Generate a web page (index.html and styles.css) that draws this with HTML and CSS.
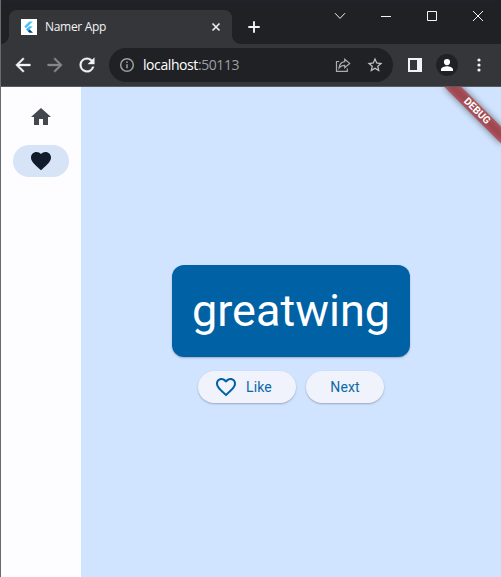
FILE: index.html
```html
<!DOCTYPE html>
<html lang="en">
<head>
<meta charset="utf-8">
<title>Namer App</title>
<link rel="stylesheet" href="styles.css">
</head>
<body>
<div class="window">
  <header class="tabstrip">
    <div class="tab">
      <svg class="favicon" viewBox="0 0 16 16"><path fill="#fff" d="M0 0h16v16H0z"/><path fill="#47c5fb" d="M8.2 2.5h3.6L5.1 9.3 3.3 7.5zM8.2 7.3h3.6L8.6 10.6l-1.8-1.8z"/><path fill="#2aa5e8" d="M5.1 10.5l1.8-1.8 1.8 1.8-1.8 1.8z"/><path fill="#00478c" d="M6.9 12.3l1.8-1.8 3.3 3.2H8.4z"/></svg>
      <span class="tab-title">Namer App</span>
      <svg class="tab-close" viewBox="0 0 10 10"><path d="M1.5 1.5l7 7M8.5 1.5l-7 7"/></svg>
    </div>
    <svg class="new-tab" viewBox="0 0 12 12"><path d="M6 .3v11.4M.3 6h11.4"/></svg>
    <div class="controls">
      <div class="control"><svg viewBox="0 0 12 12"><path d="M1 3.2l5 5.2 5-5.2"/></svg></div>
      <div class="control"><svg viewBox="0 0 12 12"><path d="M1 6.5h10"/></svg></div>
      <div class="control"><svg viewBox="0 0 12 12"><path d="M1.5 1.5h9v9h-9z"/></svg></div>
      <div class="control"><svg viewBox="0 0 12 12"><path d="M1 1l10 10M11 1L1 11"/></svg></div>
    </div>
  </header>

  <nav class="toolbar">
    <svg class="nav-icon" viewBox="0 0 24 24"><path d="M20 11H7.83l5.59-5.59L12 4l-8 8 8 8 1.41-1.41L7.83 13H20z"/></svg>
    <svg class="nav-icon disabled" viewBox="0 0 24 24"><path d="M4 11h12.17l-5.59-5.59L12 4l8 8-8 8-1.41-1.41L16.17 13H4z"/></svg>
    <svg class="nav-icon" viewBox="0 0 24 24"><path d="M17.65 6.35A7.96 7.96 0 0 0 12 4a8 8 0 1 0 7.73 10h-2.08A6 6 0 1 1 12 6c1.66 0 3.14.69 4.22 1.78L13 11h7V4z"/></svg>
    <div class="omnibox">
      <svg class="info" viewBox="0 0 16 16"><circle cx="8" cy="8" r="6.3"/><path d="M8 7.2v4M8 4.4v1.5"/></svg>
      <span class="url">localhost<span class="port">:50113</span></span>
      <svg class="share" viewBox="0 0 16 16"><path d="M4.2 4.5H1.5v9.9h10.8v-3"/><path d="M9.7 2.2l5 4.2-5 4.2V8.3c-2.7 0-4.3.8-5.6 2.6.3-3.3 2.2-5.9 5.6-6.3z"/></svg>
      <svg class="star" viewBox="0 0 24 24"><path d="M22 9.24l-7.19-.62L12 2 9.19 8.63 2 9.24l5.46 4.73L5.82 21 12 17.27 18.18 21l-1.63-7.03zM12 15.4l-3.76 2.27 1-4.28-3.32-2.88 4.38-.38L12 6.1l1.71 4.04 4.38.38-3.32 2.88 1 4.28z"/></svg>
    </div>
    <svg class="panel" viewBox="0 0 14 14"><path fill-rule="evenodd" d="M0 0h14v14H0zM2 2v10h7V2z"/></svg>
    <svg class="avatar" viewBox="0 0 22 22"><circle cx="11" cy="11" r="11"/><path d="M11 5a3.1 3.1 0 1 1 0 6.2A3.1 3.1 0 0 1 11 5zM5 17v-1.4c0-2.2 4-3.3 6-3.3s6 1.1 6 3.3V17z"/></svg>
    <svg class="menu" viewBox="0 0 4 14"><circle cx="2" cy="2" r="1.6"/><circle cx="2" cy="7" r="1.6"/><circle cx="2" cy="12" r="1.6"/></svg>
  </nav>

  <main class="app">
    <aside class="rail">
      <div class="destination"><svg viewBox="0 0 24 24"><path d="M10 20v-6h4v6h5v-8h3L12 3 2 12h3v8z"/></svg></div>
      <div class="destination selected"><svg viewBox="0 0 24 24"><path d="M12 21.35l-1.45-1.32C5.4 15.36 2 12.28 2 8.5 2 5.42 4.42 3 7.5 3c1.74 0 3.41.81 4.5 2.09C13.09 3.81 14.76 3 16.5 3 19.58 3 22 5.42 22 8.5c0 3.78-3.4 6.86-8.55 11.54z"/></svg></div>
    </aside>
    <section class="page">
      <div class="card">greatwing</div>
      <div class="actions">
        <button class="button with-icon"><svg viewBox="0 0 24 24"><path d="M16.5 3c-1.74 0-3.41.81-4.5 2.09C10.91 3.81 9.24 3 7.5 3 4.42 3 2 5.42 2 8.5c0 3.78 3.4 6.86 8.55 11.54L12 21.35l1.45-1.32C18.6 15.36 22 12.28 22 8.5 22 5.42 19.58 3 16.5 3zm-4.4 15.55l-.1.1-.1-.1C7.14 14.24 4 11.39 4 8.5 4 6.5 5.5 5 7.5 5c1.54 0 3.04.99 3.57 2.36h1.87C13.46 5.99 14.96 5 16.5 5c2 0 3.5 1.5 3.5 3.5 0 2.89-3.14 5.74-7.9 10.05z"/></svg>Like</button>
        <button class="button">Next</button>
      </div>
      <div class="banner">
        <div class="ribbon-shadow"></div>
        <div class="ribbon">DEBUG</div>
      </div>
    </section>
  </main>
</div>
</body>
</html>
```
FILE: styles.css
```css
* { box-sizing: border-box; }
body { margin: 0; }
svg { display: block; flex: none; }

.window {
  width: 501px;
  height: 577px;
  display: flex;
  flex-direction: column;
  overflow: hidden;
  border-left: 1px solid #6b6b6d;
  background: #202124;
}

.tabstrip {
  height: 44px;
  flex: none;
  display: flex;
  align-items: flex-start;
  margin-left: -1px;
  padding-left: 9px;
  background: #202124;
  border-top: 1px solid #22212f;
  font-family: "Open Sans", "Noto Sans", sans-serif;
}
.tab {
  position: relative;
  width: 223px;
  height: 34px;
  margin-top: 9px;
  padding: 0 12px;
  display: flex;
  align-items: center;
  border-radius: 8px 8px 0 0;
  background: #35363a;
}
.tab::before, .tab::after {
  content: "";
  position: absolute;
  bottom: 0;
  width: 8px;
  height: 8px;
}
.tab::before { left: -8px; background: radial-gradient(circle at 0 0, transparent 7.5px, #35363a 8px); }
.tab::after { right: -8px; background: radial-gradient(circle at 100% 0, transparent 7.5px, #35363a 8px); }
.favicon { width: 16px; height: 16px; }
.tab-title {
  flex: 1;
  margin-left: 8px;
  color: #f1f3f4;
  font-size: 12px;
  line-height: 16px;
  letter-spacing: -0.3px;
}
.tab-close { width: 10px; height: 10px; margin-right: -1px; fill: none; stroke: #e8eaed; stroke-width: 1.7; }
.new-tab { width: 12px; height: 12px; margin: 20px 0 0 16px; fill: none; stroke: #f1f3f4; stroke-width: 1.9; }
.controls { display: flex; margin-left: auto; }
.control { width: 46px; height: 30px; display: flex; align-items: center; justify-content: center; }
.control svg { width: 12px; height: 12px; fill: none; stroke: #f4f4f4; stroke-width: 1; }

.toolbar {
  height: 43px;
  flex: none;
  display: flex;
  align-items: center;
  padding: 0 0 1px 11px;
  background: #35363a;
  border-bottom: 1px solid #5a5b5e;
}
.nav-icon { width: 22px; height: 22px; margin-right: 10px; fill: #f1f3f4; stroke: #f1f3f4; stroke-width: 0.4; }
.disabled { fill: #85878b; stroke: #85878b; }
.omnibox {
  width: 284px;
  height: 34px;
  margin-left: 1px;
  padding: 0 10px;
  display: flex;
  align-items: center;
  border-radius: 17px;
  background: #202124;
}
.info { width: 16px; height: 16px; fill: none; stroke: #9aa0a6; stroke-width: 1.5; }
.url {
  flex: 1;
  margin-left: 8px;
  color: #fff;
  font: 14px/20px "Open Sans", "Noto Sans", sans-serif;
  letter-spacing: -0.42px;
}
.port { color: #9aa0a6; }
.share { width: 16px; height: 16px; fill: none; stroke: #a9acb0; stroke-width: 1.2; }
.star { width: 18px; height: 18px; margin: 0 -1px 0 15px; fill: #c4c7ca; }
.panel { width: 14px; height: 14px; margin-left: 15px; fill: #f1f3f4; }
.avatar { width: 22px; height: 22px; margin-left: 14px; fill: #fff; }
.avatar circle { fill: #202124; }
.menu { width: 4px; height: 14px; margin-left: 19px; fill: #f1f3f4; }

.app { flex: 1; display: flex; font-family: Roboto, sans-serif; }
.rail {
  width: 80px;
  display: flex;
  flex-direction: column;
  align-items: center;
  gap: 12px;
  padding-top: 14px;
  background: #fdfcff;
}
.destination {
  width: 56px;
  height: 32px;
  display: flex;
  align-items: center;
  justify-content: center;
  border-radius: 16px;
  fill: #43474e;
}
.destination svg { width: 24px; height: 24px; }
.selected { background: #d7e3f7; fill: #101c2b; }

.page {
  position: relative;
  flex: 1;
  display: flex;
  flex-direction: column;
  align-items: center;
  padding-top: 178px;
  overflow: hidden;
  background: #d1e4ff;
}
.card {
  width: 238px;
  height: 92px;
  border-radius: 12px;
  background: #0061a4;
  box-shadow: 0 1px 2px rgba(0, 0, 0, 0.25);
  color: #fff;
  font-size: 45px;
  line-height: 92px;
  text-align: center;
}
.actions { display: flex; gap: 10px; margin-top: 14px; }
.button {
  height: 32px;
  display: flex;
  align-items: center;
  justify-content: center;
  width: 78px;
  padding: 0;
  border: 0;
  border-radius: 16px;
  background: #f0f3fb;
  box-shadow: 0 1px 2px rgba(0, 0, 0, 0.27);
  color: #0c69a8;
  font: 400 14px/20px Roboto, sans-serif;
  letter-spacing: 0.1px;
}
.with-icon { width: 98px; gap: 8px; justify-content: flex-start; padding-left: 16px; }
.button svg { width: 24px; height: 24px; fill: #0061a4; }

.banner {
  position: absolute;
  top: 0;
  left: 100%;
  transform: rotate(45deg);
  transform-origin: 0 0;
}
.ribbon, .ribbon-shadow {
  position: absolute;
  top: 28px;
  left: -40px;
  width: 80px;
  height: 12px;
}
.ribbon-shadow { background: rgba(0, 0, 0, 0.5); filter: blur(3.9px); }
.ribbon {
  background: rgba(183, 40, 44, 0.63);
  color: #fff;
  font-size: 10.2px;
  font-weight: 700;
  line-height: 12px;
  text-align: center;
}
```
